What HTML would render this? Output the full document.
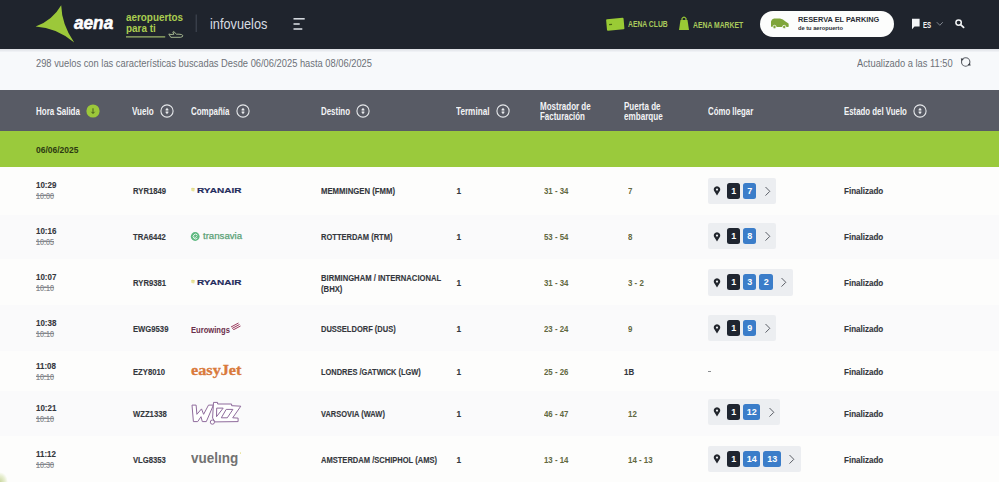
<!DOCTYPE html><html><head><meta charset="utf-8"><style>
*{margin:0;padding:0;box-sizing:border-box}
html,body{width:999px;height:482px;overflow:hidden;background:#fdfdfc;font-family:"Liberation Sans",sans-serif}
.t{position:absolute;white-space:nowrap;transform-origin:0 0}
.r{-webkit-text-stroke:0.12px #34373d}
.a{position:absolute}
</style></head><body>
<div class="a" style="left:0;top:0;width:999px;height:49px;background:#1f242d"></div>
<div class="a" style="left:0;top:49px;width:999px;height:41px;background:#f7f9fb"></div>
<div class="a" style="left:0;top:49px;width:999px;height:3px;background:linear-gradient(#dcdfe4,#f3f5f8)"></div>
<svg class="a" style="left:0;top:0" width="320" height="49" viewBox="0 0 320 49">
<path d="M61.2 5.2 Q61.7 24.4 74.2 42.6 Q56.4 27.7 35.6 26.6 Q52.6 20.2 61.2 5.2 Z" fill="#9cc83a"/>
<line x1="126" y1="36.9" x2="165.2" y2="36.9" stroke="#9db56a" stroke-width="1.2"/>
<path d="M168.8 34 L170.8 37.3 L180.5 37.3 Q183.3 36.8 182.8 35.5 Q182 34.2 179 34.2 L176.5 34.2 L173.8 31.6 L172.8 32 L174 34.2 L171 34.5 Z" fill="none" stroke="#b2c59a" stroke-width="0.9"/>
<line x1="196.2" y1="14.5" x2="196.2" y2="32" stroke="#444b56" stroke-width="1"/>
<line x1="293.5" y1="18.8" x2="304.7" y2="18.8" stroke="#d4d8de" stroke-width="1.6"/>
<line x1="293.5" y1="24" x2="299.7" y2="24" stroke="#d4d8de" stroke-width="1.6"/>
<line x1="293.5" y1="29" x2="302.3" y2="29" stroke="#d4d8de" stroke-width="1.6"/>
</svg>
<div class="t " style="left:74.30px;top:13.18px;font-size:19px;line-height:19px;font-weight:700;color:#fff;transform:scaleX(0.9049);font-style:italic;-webkit-text-stroke:0.6px #fff;">aena</div>
<div class="t " style="left:125.60px;top:11.76px;font-size:10.8px;line-height:10.8px;font-weight:700;color:#aacd50;transform:scaleX(0.9147);">aeropuertos</div>
<div class="t " style="left:125.60px;top:22.96px;font-size:10.8px;line-height:10.8px;font-weight:700;color:#aacd50;transform:scaleX(0.9167);">para ti</div>
<div class="t " style="left:209.60px;top:16.53px;font-size:14.2px;line-height:14.2px;font-weight:400;color:#d8dce2;transform:scaleX(0.8973);">infovuelos</div>
<svg class="a" style="left:600px;top:0" width="399" height="49" viewBox="600 0 399 49">
<g transform="rotate(-5 615 24)"><rect x="606.5" y="18.5" width="17.5" height="11.5" rx="1" fill="#9acb35"/><rect x="609" y="23.5" width="3" height="1.2" fill="#4a6a10"/></g>
<path d="M680.5 20 L687.5 20 L689 30 L679 30 Z" fill="#9acb35"/>
<path d="M682 20.5 L682 18.5 Q684 15.8 686 18.5 L686 20.5" fill="none" stroke="#9acb35" stroke-width="1.2"/>
</svg>
<div class="t " style="left:628.00px;top:20.49px;font-size:8.6px;line-height:8.6px;font-weight:700;color:#aacb5c;transform:scaleX(0.7891);">AENA CLUB</div>
<div class="t " style="left:693.20px;top:20.59px;font-size:8.6px;line-height:8.6px;font-weight:700;color:#aacb5c;transform:scaleX(0.7942);">AENA MARKET</div>
<div class="a" style="left:759.5px;top:11px;width:134.5px;height:25.5px;border-radius:13px;background:#fcfdfc"></div>
<svg class="a" style="left:770px;top:17px" width="20" height="13" viewBox="770 17 20 13">
<path d="M771 26 L771 21.5 Q771.5 19 774 18.6 L780 18.4 Q783 18.6 785.5 21.5 L788.5 23.5 Q789 25 788.5 27 L771.5 27 Z" fill="#7fa53a"/>
<circle cx="774.5" cy="27" r="1.7" fill="#7fa53a" stroke="#fcfdfc" stroke-width="0.8"/>
<circle cx="784.2" cy="27" r="1.7" fill="#7fa53a" stroke="#fcfdfc" stroke-width="0.8"/>
</svg>
<div class="t " style="left:797.80px;top:16.36px;font-size:8px;line-height:8px;font-weight:700;color:#2a2e35;transform:scaleX(0.9189);">RESERVA EL PARKING</div>
<div class="t " style="left:797.80px;top:25.07px;font-size:6.2px;line-height:6.2px;font-weight:700;color:#2a2e35;transform:scaleX(0.9199);">de tu aeropuerto</div>
<svg class="a" style="left:905px;top:12px" width="70" height="24" viewBox="905 12 70 24">
<path d="M912 18.8 L919.6 18.8 L919.6 26.5 L914.5 26.5 L912 29.2 Z" fill="#f2f4f6"/>
<path d="M936.8 22.2 L939.8 25.3 L942.8 22.2" fill="none" stroke="#8a9099" stroke-width="0.9"/>
<circle cx="958.6" cy="22.6" r="2.7" fill="none" stroke="#f2f4f6" stroke-width="1.5"/>
<line x1="960.6" y1="24.6" x2="963.6" y2="27.3" stroke="#f2f4f6" stroke-width="1.8" stroke-linecap="round"/>
</svg>
<div class="t " style="left:922.80px;top:20.59px;font-size:8.6px;line-height:8.6px;font-weight:700;color:#f2f4f6;transform:scaleX(0.7142);">ES</div>
<div class="t " style="left:36.00px;top:59.33px;font-size:10px;line-height:10px;font-weight:400;color:#6d7178;transform:scaleX(0.9327);">298 vuelos con las características buscadas Desde 06/06/2025 hasta 08/06/2025</div>
<div class="t " style="left:856.70px;top:59.23px;font-size:10px;line-height:10px;font-weight:400;color:#6d7178;transform:scaleX(0.9313);">Actualizado a las 11:50</div>
<svg class="a" style="left:958px;top:54px" width="16" height="16" viewBox="958 54 16 16">
<circle cx="965.7" cy="62" r="4.2" fill="none" stroke="#5b5f66" stroke-width="1.1"/>
<path d="M960.8 58.2 L963.8 59 L961.5 61.3 Z" fill="#3b3f46"/>
<path d="M970.6 65.8 L967.6 65 L969.9 62.7 Z" fill="#3b3f46"/>
</svg>
<div class="a" style="left:0;top:90px;width:999px;height:40.5px;background:#585b65"></div>
<div class="t " style="left:35.50px;top:107.11px;font-size:10.1px;line-height:10.1px;font-weight:700;color:#f3f4f6;transform:scaleX(0.7906);">Hora Salida</div>
<svg class="a" style="left:85.5px;top:104.1px" width="14" height="14" viewBox="0 0 14 14"><circle cx="7" cy="7" r="6.6" fill="#9cc83a"/><path d="M7 4.3 L7 9.2 M5.4 7.8 L7 9.5 L8.6 7.8" fill="none" stroke="#3e5218" stroke-width="0.9"/></svg>
<div class="t " style="left:132.00px;top:107.11px;font-size:10.1px;line-height:10.1px;font-weight:700;color:#f3f4f6;transform:scaleX(0.8020);">Vuelo</div>
<svg class="a" style="left:159.5px;top:104.1px" width="14" height="14" viewBox="0 0 14 14"><circle cx="7" cy="7" r="6.1" fill="none" stroke="#e6e8eb" stroke-width="1.1"/><path d="M5.1 6.3 L8.9 6.3 L7 3.7 Z M5.1 7.7 L8.9 7.7 L7 10.3 Z" fill="#e6e8eb"/><path d="M7 5.5 L7 8.5" stroke="#e6e8eb" stroke-width="0.8"/></svg>
<div class="t " style="left:190.50px;top:107.11px;font-size:10.1px;line-height:10.1px;font-weight:700;color:#f3f4f6;transform:scaleX(0.7868);">Compañía</div>
<svg class="a" style="left:236.0px;top:104.1px" width="14" height="14" viewBox="0 0 14 14"><circle cx="7" cy="7" r="6.1" fill="none" stroke="#e6e8eb" stroke-width="1.1"/><path d="M5.1 6.3 L8.9 6.3 L7 3.7 Z M5.1 7.7 L8.9 7.7 L7 10.3 Z" fill="#e6e8eb"/><path d="M7 5.5 L7 8.5" stroke="#e6e8eb" stroke-width="0.8"/></svg>
<div class="t " style="left:320.50px;top:107.11px;font-size:10.1px;line-height:10.1px;font-weight:700;color:#f3f4f6;transform:scaleX(0.7834);">Destino</div>
<svg class="a" style="left:356.0px;top:104.1px" width="14" height="14" viewBox="0 0 14 14"><circle cx="7" cy="7" r="6.1" fill="none" stroke="#e6e8eb" stroke-width="1.1"/><path d="M5.1 6.3 L8.9 6.3 L7 3.7 Z M5.1 7.7 L8.9 7.7 L7 10.3 Z" fill="#e6e8eb"/><path d="M7 5.5 L7 8.5" stroke="#e6e8eb" stroke-width="0.8"/></svg>
<div class="t " style="left:456.00px;top:107.11px;font-size:10.1px;line-height:10.1px;font-weight:700;color:#f3f4f6;transform:scaleX(0.8100);">Terminal</div>
<svg class="a" style="left:496.0px;top:104.1px" width="14" height="14" viewBox="0 0 14 14"><circle cx="7" cy="7" r="6.1" fill="none" stroke="#e6e8eb" stroke-width="1.1"/><path d="M5.1 6.3 L8.9 6.3 L7 3.7 Z M5.1 7.7 L8.9 7.7 L7 10.3 Z" fill="#e6e8eb"/><path d="M7 5.5 L7 8.5" stroke="#e6e8eb" stroke-width="0.8"/></svg>
<div class="t " style="left:540.00px;top:101.61px;font-size:10.1px;line-height:10.1px;font-weight:700;color:#f3f4f6;transform:scaleX(0.7932);">Mostrador de</div>
<div class="t " style="left:540.00px;top:112.31px;font-size:10.1px;line-height:10.1px;font-weight:700;color:#f3f4f6;transform:scaleX(0.7858);">Facturación</div>
<div class="t " style="left:624.30px;top:101.61px;font-size:10.1px;line-height:10.1px;font-weight:700;color:#f3f4f6;transform:scaleX(0.7934);">Puerta de</div>
<div class="t " style="left:624.30px;top:112.31px;font-size:10.1px;line-height:10.1px;font-weight:700;color:#f3f4f6;transform:scaleX(0.8026);">embarque</div>
<div class="t " style="left:708.00px;top:107.11px;font-size:10.1px;line-height:10.1px;font-weight:700;color:#f3f4f6;transform:scaleX(0.7751);">Cómo llegar</div>
<div class="t " style="left:843.60px;top:107.11px;font-size:10.1px;line-height:10.1px;font-weight:700;color:#f3f4f6;transform:scaleX(0.7765);">Estado del Vuelo</div>
<svg class="a" style="left:912.8px;top:104.1px" width="14" height="14" viewBox="0 0 14 14"><circle cx="7" cy="7" r="6.1" fill="none" stroke="#e6e8eb" stroke-width="1.1"/><path d="M5.1 6.3 L8.9 6.3 L7 3.7 Z M5.1 7.7 L8.9 7.7 L7 10.3 Z" fill="#e6e8eb"/><path d="M7 5.5 L7 8.5" stroke="#e6e8eb" stroke-width="0.8"/></svg>
<div class="a" style="left:0;top:130.5px;width:999px;height:36.5px;background:#9aca3c"></div>
<div class="t " style="left:35.50px;top:145.81px;font-size:8.4px;line-height:8.4px;font-weight:700;color:#2d3a12;transform:scaleX(1.0109);">06/06/2025</div>
<div class="t r" style="left:35.90px;top:181.22px;font-size:8.3px;line-height:8.3px;font-weight:700;color:#34373d;transform:scaleX(0.9600);">10:29</div>
<div class="t " style="left:35.90px;top:192.32px;font-size:8.3px;line-height:8.3px;font-weight:400;color:#85888d;transform:scaleX(0.8600);-webkit-text-stroke:0.2px #85888d;">10:00</div>
<div class="a" style="left:35.8px;top:195.2px;width:18.3px;height:0.9px;background:#85888d"></div>
<div class="t r" style="left:132.70px;top:187.12px;font-size:8.3px;line-height:8.3px;font-weight:700;color:#34373d;transform:scaleX(0.9250);">RYR1849</div>
<div class="t r" style="left:320.90px;top:187.12px;font-size:8.3px;line-height:8.3px;font-weight:700;color:#34373d;transform:scaleX(0.9331);">MEMMINGEN (FMM)</div>
<div class="t r" style="left:456.60px;top:187.12px;font-size:8.3px;line-height:8.3px;font-weight:700;color:#34373d;transform:scaleX(1.0000);">1</div>
<div class="t " style="left:544.10px;top:187.12px;font-size:8.3px;line-height:8.3px;font-weight:700;color:#62683f;transform:scaleX(0.9440);">31 - 34</div>
<div class="t " style="left:628.00px;top:187.12px;font-size:8.3px;line-height:8.3px;font-weight:700;color:#62683f;transform:scaleX(0.9500);">7</div>
<div class="t r" style="left:843.70px;top:187.12px;font-size:8.3px;line-height:8.3px;font-weight:700;color:#34373d;transform:scaleX(0.9683);">Finalizado</div>
<div class="a" style="left:708.3px;top:177.5px;width:68.2px;height:26.3px;border-radius:2px;background:#eceef1"><div class="a" style="left:18.7px;top:5px;width:13.5px;height:16px;border-radius:2.5px;background:#1f2530;color:#fff;font-size:9px;font-weight:700;line-height:16px;text-align:center">1</div><div class="a" style="left:34.7px;top:5px;width:13.5px;height:16px;border-radius:2.5px;background:#3b7dc9;color:#fff;font-size:9px;font-weight:700;line-height:16px;text-align:center">7</div><svg class="a" style="left:55.7px;top:8px" width="8" height="11" viewBox="0 0 8 11"><path d="M1.5 1 L5.8 5.3 L1.5 9.6" fill="none" stroke="#5a5e66" stroke-width="1"/></svg><svg class="a" style="left:5px;top:8.5px" width="8" height="10" viewBox="0 0 8 10"><path d="M4 9.5 L1.2 5 A3.2 3.2 0 1 1 6.8 5 Z" fill="#22262d"/><circle cx="4" cy="3.6" r="1.1" fill="#eceef1"/></svg></div>
<svg class="a" style="left:190px;top:187.0px" width="6" height="6" viewBox="0 0 6 6"><path d="M1 1 Q3 0.2 5 1.2 L4.2 4.5 L1.5 4 Z" fill="#e9e49a"/><path d="M2.6 1.5 L3.6 1.6" stroke="#c9c070" stroke-width="0.6"/></svg>
<div class="t " style="left:197.00px;top:187.46px;font-size:8px;line-height:8px;font-weight:700;color:#1f2b5c;transform:scaleX(1.2542);-webkit-text-stroke:0.15px #1f2b5c;">RYANAIR</div>
<div class="a" style="left:0;top:215px;width:999px;height:44px;background:#fafafb"></div>
<div class="t r" style="left:35.90px;top:227.22px;font-size:8.3px;line-height:8.3px;font-weight:700;color:#34373d;transform:scaleX(0.9600);">10:16</div>
<div class="t " style="left:35.90px;top:238.32px;font-size:8.3px;line-height:8.3px;font-weight:400;color:#85888d;transform:scaleX(0.8600);-webkit-text-stroke:0.2px #85888d;">10:05</div>
<div class="a" style="left:35.8px;top:241.2px;width:18.3px;height:0.9px;background:#85888d"></div>
<div class="t r" style="left:132.70px;top:233.12px;font-size:8.3px;line-height:8.3px;font-weight:700;color:#34373d;transform:scaleX(0.9250);">TRA6442</div>
<div class="t r" style="left:320.90px;top:233.12px;font-size:8.3px;line-height:8.3px;font-weight:700;color:#34373d;transform:scaleX(0.9068);">ROTTERDAM (RTM)</div>
<div class="t r" style="left:456.60px;top:233.12px;font-size:8.3px;line-height:8.3px;font-weight:700;color:#34373d;transform:scaleX(1.0000);">1</div>
<div class="t " style="left:544.10px;top:233.12px;font-size:8.3px;line-height:8.3px;font-weight:700;color:#62683f;transform:scaleX(0.9440);">53 - 54</div>
<div class="t " style="left:628.00px;top:233.12px;font-size:8.3px;line-height:8.3px;font-weight:700;color:#62683f;transform:scaleX(0.9500);">8</div>
<div class="t r" style="left:843.70px;top:233.12px;font-size:8.3px;line-height:8.3px;font-weight:700;color:#34373d;transform:scaleX(0.9683);">Finalizado</div>
<div class="a" style="left:708.3px;top:223.2px;width:68.2px;height:26.3px;border-radius:2px;background:#eceef1"><div class="a" style="left:18.7px;top:5px;width:13.5px;height:16px;border-radius:2.5px;background:#1f2530;color:#fff;font-size:9px;font-weight:700;line-height:16px;text-align:center">1</div><div class="a" style="left:34.7px;top:5px;width:13.5px;height:16px;border-radius:2.5px;background:#3b7dc9;color:#fff;font-size:9px;font-weight:700;line-height:16px;text-align:center">8</div><svg class="a" style="left:55.7px;top:8px" width="8" height="11" viewBox="0 0 8 11"><path d="M1.5 1 L5.8 5.3 L1.5 9.6" fill="none" stroke="#5a5e66" stroke-width="1"/></svg><svg class="a" style="left:5px;top:8.5px" width="8" height="10" viewBox="0 0 8 10"><path d="M4 9.5 L1.2 5 A3.2 3.2 0 1 1 6.8 5 Z" fill="#22262d"/><circle cx="4" cy="3.6" r="1.1" fill="#eceef1"/></svg></div>
<svg class="a" style="left:190px;top:231px" width="11" height="11" viewBox="190 231 11 11"><circle cx="195.2" cy="236.5" r="4.4" fill="#5db880"/><path d="M197.3 234.9 A2.4 2.4 0 1 0 197.4 238.1" fill="none" stroke="#e8f6ec" stroke-width="1"/><path d="M194.2 236.8 L195.3 237.9 L197.2 235.6" fill="none" stroke="#e8f6ec" stroke-width="0.8"/></svg>
<div class="t " style="left:202.50px;top:232.35px;font-size:8.7px;line-height:8.7px;font-weight:400;color:#5aa277;transform:scaleX(1.1070);-webkit-text-stroke:0.25px #5aa277;">transavia</div>
<div class="t r" style="left:35.90px;top:273.22px;font-size:8.3px;line-height:8.3px;font-weight:700;color:#34373d;transform:scaleX(0.9600);">10:07</div>
<div class="t " style="left:35.90px;top:284.32px;font-size:8.3px;line-height:8.3px;font-weight:400;color:#85888d;transform:scaleX(0.8600);-webkit-text-stroke:0.2px #85888d;">10:10</div>
<div class="a" style="left:35.8px;top:287.2px;width:18.3px;height:0.9px;background:#85888d"></div>
<div class="t r" style="left:132.70px;top:279.12px;font-size:8.3px;line-height:8.3px;font-weight:700;color:#34373d;transform:scaleX(0.9250);">RYR9381</div>
<div class="t r" style="left:320.90px;top:273.72px;font-size:8.3px;line-height:8.3px;font-weight:700;color:#34373d;transform:scaleX(0.9212);">BIRMINGHAM / INTERNACIONAL</div>
<div class="t r" style="left:320.90px;top:284.62px;font-size:8.3px;line-height:8.3px;font-weight:700;color:#34373d;transform:scaleX(0.9300);">(BHX)</div>
<div class="t r" style="left:456.60px;top:279.12px;font-size:8.3px;line-height:8.3px;font-weight:700;color:#34373d;transform:scaleX(1.0000);">1</div>
<div class="t " style="left:544.10px;top:279.12px;font-size:8.3px;line-height:8.3px;font-weight:700;color:#62683f;transform:scaleX(0.9440);">31 - 34</div>
<div class="t " style="left:628.00px;top:279.12px;font-size:8.3px;line-height:8.3px;font-weight:700;color:#62683f;transform:scaleX(0.9500);">3 - 2</div>
<div class="t r" style="left:843.70px;top:279.12px;font-size:8.3px;line-height:8.3px;font-weight:700;color:#34373d;transform:scaleX(0.9683);">Finalizado</div>
<div class="a" style="left:708.3px;top:269.4px;width:84.7px;height:26.3px;border-radius:2px;background:#eceef1"><div class="a" style="left:18.7px;top:5px;width:13.5px;height:16px;border-radius:2.5px;background:#1f2530;color:#fff;font-size:9px;font-weight:700;line-height:16px;text-align:center">1</div><div class="a" style="left:34.7px;top:5px;width:13.5px;height:16px;border-radius:2.5px;background:#3b7dc9;color:#fff;font-size:9px;font-weight:700;line-height:16px;text-align:center">3</div><div class="a" style="left:51.2px;top:5px;width:13.5px;height:16px;border-radius:2.5px;background:#3b7dc9;color:#fff;font-size:9px;font-weight:700;line-height:16px;text-align:center">2</div><svg class="a" style="left:72.2px;top:8px" width="8" height="11" viewBox="0 0 8 11"><path d="M1.5 1 L5.8 5.3 L1.5 9.6" fill="none" stroke="#5a5e66" stroke-width="1"/></svg><svg class="a" style="left:5px;top:8.5px" width="8" height="10" viewBox="0 0 8 10"><path d="M4 9.5 L1.2 5 A3.2 3.2 0 1 1 6.8 5 Z" fill="#22262d"/><circle cx="4" cy="3.6" r="1.1" fill="#eceef1"/></svg></div>
<svg class="a" style="left:190px;top:279.0px" width="6" height="6" viewBox="0 0 6 6"><path d="M1 1 Q3 0.2 5 1.2 L4.2 4.5 L1.5 4 Z" fill="#e9e49a"/><path d="M2.6 1.5 L3.6 1.6" stroke="#c9c070" stroke-width="0.6"/></svg>
<div class="t " style="left:197.00px;top:279.46px;font-size:8px;line-height:8px;font-weight:700;color:#1f2b5c;transform:scaleX(1.2542);-webkit-text-stroke:0.15px #1f2b5c;">RYANAIR</div>
<div class="a" style="left:0;top:305px;width:999px;height:46px;background:#fafafb"></div>
<div class="t r" style="left:35.90px;top:319.22px;font-size:8.3px;line-height:8.3px;font-weight:700;color:#34373d;transform:scaleX(0.9600);">10:38</div>
<div class="t " style="left:35.90px;top:330.32px;font-size:8.3px;line-height:8.3px;font-weight:400;color:#85888d;transform:scaleX(0.8600);-webkit-text-stroke:0.2px #85888d;">10:10</div>
<div class="a" style="left:35.8px;top:333.2px;width:18.3px;height:0.9px;background:#85888d"></div>
<div class="t r" style="left:132.70px;top:325.12px;font-size:8.3px;line-height:8.3px;font-weight:700;color:#34373d;transform:scaleX(0.9250);">EWG9539</div>
<div class="t r" style="left:320.90px;top:325.12px;font-size:8.3px;line-height:8.3px;font-weight:700;color:#34373d;transform:scaleX(0.9050);">DUSSELDORF (DUS)</div>
<div class="t r" style="left:456.60px;top:325.12px;font-size:8.3px;line-height:8.3px;font-weight:700;color:#34373d;transform:scaleX(1.0000);">1</div>
<div class="t " style="left:544.10px;top:325.12px;font-size:8.3px;line-height:8.3px;font-weight:700;color:#62683f;transform:scaleX(0.9440);">23 - 24</div>
<div class="t " style="left:628.00px;top:325.12px;font-size:8.3px;line-height:8.3px;font-weight:700;color:#62683f;transform:scaleX(0.9500);">9</div>
<div class="t r" style="left:843.70px;top:325.12px;font-size:8.3px;line-height:8.3px;font-weight:700;color:#34373d;transform:scaleX(0.9683);">Finalizado</div>
<div class="a" style="left:708.3px;top:315.1px;width:68.2px;height:26.3px;border-radius:2px;background:#eceef1"><div class="a" style="left:18.7px;top:5px;width:13.5px;height:16px;border-radius:2.5px;background:#1f2530;color:#fff;font-size:9px;font-weight:700;line-height:16px;text-align:center">1</div><div class="a" style="left:34.7px;top:5px;width:13.5px;height:16px;border-radius:2.5px;background:#3b7dc9;color:#fff;font-size:9px;font-weight:700;line-height:16px;text-align:center">9</div><svg class="a" style="left:55.7px;top:8px" width="8" height="11" viewBox="0 0 8 11"><path d="M1.5 1 L5.8 5.3 L1.5 9.6" fill="none" stroke="#5a5e66" stroke-width="1"/></svg><svg class="a" style="left:5px;top:8.5px" width="8" height="10" viewBox="0 0 8 10"><path d="M4 9.5 L1.2 5 A3.2 3.2 0 1 1 6.8 5 Z" fill="#22262d"/><circle cx="4" cy="3.6" r="1.1" fill="#eceef1"/></svg></div>
<div class="t " style="left:190.80px;top:326.01px;font-size:8.4px;line-height:8.4px;font-weight:700;color:#6a2e4a;transform:scaleX(0.9086);">Eurowings</div>
<svg class="a" style="left:230px;top:321.5px" width="11" height="8" viewBox="0 0 11 8"><path d="M1 5 L8.5 1 M2 6.5 L9.5 2.5 M3 8 L10.5 4" stroke="#9b3a5d" stroke-width="1"/></svg>
<div class="t r" style="left:35.90px;top:361.72px;font-size:8.3px;line-height:8.3px;font-weight:700;color:#34373d;transform:scaleX(0.9600);">11:08</div>
<div class="t " style="left:35.90px;top:372.82px;font-size:8.3px;line-height:8.3px;font-weight:400;color:#85888d;transform:scaleX(0.8600);-webkit-text-stroke:0.2px #85888d;">10:10</div>
<div class="a" style="left:35.8px;top:375.7px;width:18.3px;height:0.9px;background:#85888d"></div>
<div class="t r" style="left:132.70px;top:367.62px;font-size:8.3px;line-height:8.3px;font-weight:700;color:#34373d;transform:scaleX(0.9250);">EZY8010</div>
<div class="t r" style="left:320.90px;top:367.62px;font-size:8.3px;line-height:8.3px;font-weight:700;color:#34373d;transform:scaleX(0.8965);">LONDRES /GATWICK (LGW)</div>
<div class="t r" style="left:456.60px;top:367.62px;font-size:8.3px;line-height:8.3px;font-weight:700;color:#34373d;transform:scaleX(1.0000);">1</div>
<div class="t " style="left:544.10px;top:367.62px;font-size:8.3px;line-height:8.3px;font-weight:700;color:#62683f;transform:scaleX(0.9440);">25 - 26</div>
<div class="t r" style="left:624.20px;top:367.62px;font-size:8.3px;line-height:8.3px;font-weight:700;color:#34373d;transform:scaleX(0.9500);">1B</div>
<div class="t r" style="left:843.70px;top:367.62px;font-size:8.3px;line-height:8.3px;font-weight:700;color:#34373d;transform:scaleX(0.9683);">Finalizado</div>
<div class="a" style="left:708px;top:371.1px;width:2.5px;height:1px;background:#8a8d90"></div>
<div class="t " style="left:190.80px;top:363.80px;font-size:13.6px;line-height:13.6px;font-weight:700;color:#d97a3c;transform:scaleX(1.1940);font-family:'Liberation Serif',serif;-webkit-text-stroke:0.3px #d97a3c;">easyJet</div>
<div class="a" style="left:0;top:391px;width:999px;height:45px;background:#fafafb"></div>
<div class="t r" style="left:35.90px;top:404.22px;font-size:8.3px;line-height:8.3px;font-weight:700;color:#34373d;transform:scaleX(0.9600);">10:21</div>
<div class="t " style="left:35.90px;top:415.32px;font-size:8.3px;line-height:8.3px;font-weight:400;color:#85888d;transform:scaleX(0.8600);-webkit-text-stroke:0.2px #85888d;">10:10</div>
<div class="a" style="left:35.8px;top:418.2px;width:18.3px;height:0.9px;background:#85888d"></div>
<div class="t r" style="left:132.70px;top:410.12px;font-size:8.3px;line-height:8.3px;font-weight:700;color:#34373d;transform:scaleX(0.9250);">WZZ1338</div>
<div class="t r" style="left:320.90px;top:410.12px;font-size:8.3px;line-height:8.3px;font-weight:700;color:#34373d;transform:scaleX(0.8999);">VARSOVIA (WAW)</div>
<div class="t r" style="left:456.60px;top:410.12px;font-size:8.3px;line-height:8.3px;font-weight:700;color:#34373d;transform:scaleX(1.0000);">1</div>
<div class="t " style="left:544.10px;top:410.12px;font-size:8.3px;line-height:8.3px;font-weight:700;color:#62683f;transform:scaleX(0.9440);">46 - 47</div>
<div class="t " style="left:628.00px;top:410.12px;font-size:8.3px;line-height:8.3px;font-weight:700;color:#62683f;transform:scaleX(0.9500);">12</div>
<div class="t r" style="left:843.70px;top:410.12px;font-size:8.3px;line-height:8.3px;font-weight:700;color:#34373d;transform:scaleX(0.9683);">Finalizado</div>
<div class="a" style="left:708.3px;top:398.5px;width:72.2px;height:26.3px;border-radius:2px;background:#eceef1"><div class="a" style="left:18.7px;top:5px;width:13.5px;height:16px;border-radius:2.5px;background:#1f2530;color:#fff;font-size:9px;font-weight:700;line-height:16px;text-align:center">1</div><div class="a" style="left:34.7px;top:5px;width:17.5px;height:16px;border-radius:2.5px;background:#3b7dc9;color:#fff;font-size:9px;font-weight:700;line-height:16px;text-align:center">12</div><svg class="a" style="left:59.7px;top:8px" width="8" height="11" viewBox="0 0 8 11"><path d="M1.5 1 L5.8 5.3 L1.5 9.6" fill="none" stroke="#5a5e66" stroke-width="1"/></svg><svg class="a" style="left:5px;top:8.5px" width="8" height="10" viewBox="0 0 8 10"><path d="M4 9.5 L1.2 5 A3.2 3.2 0 1 1 6.8 5 Z" fill="#22262d"/><circle cx="4" cy="3.6" r="1.1" fill="#eceef1"/></svg></div>
<svg class="a" style="left:0;top:0" width="260" height="482" viewBox="0 0 260 482"><g fill="#fff" stroke="#8f6b9c" stroke-width="1" stroke-linejoin="round"><path d="M192,405.1 L196.1,405.1 L196.9,414.3 L201.5,408.9 L203.6,414.3 L208.5,405.1 L213.4,405.1 L206.3,421.6 L202.3,421.6 L201,416.7 L197.7,421.6 L193.4,421.6 Z"/><path d="M213.5,402.4 L217.6,402.4 L217.6,404 L231.6,404 L231.6,405.7 L240.8,406.2 L232.7,417.8 L238.1,418.1 L238.1,421.6 L214.9,421.9 L212.6,418 Z"/><path d="M216.7,408.1 L223.2,408.1 L216.5,416.7 Z"/><path d="M226.2,409.4 L232.9,409.4 L227.3,417.8 L221.3,417.8 Z"/><circle cx="212.4" cy="422.1" r="2.1"/></g></svg>
<div class="t r" style="left:35.90px;top:450.22px;font-size:8.3px;line-height:8.3px;font-weight:700;color:#34373d;transform:scaleX(0.9600);">11:12</div>
<div class="t " style="left:35.90px;top:461.32px;font-size:8.3px;line-height:8.3px;font-weight:400;color:#85888d;transform:scaleX(0.8600);-webkit-text-stroke:0.2px #85888d;">10:30</div>
<div class="a" style="left:35.8px;top:464.2px;width:18.3px;height:0.9px;background:#85888d"></div>
<div class="t r" style="left:132.70px;top:456.12px;font-size:8.3px;line-height:8.3px;font-weight:700;color:#34373d;transform:scaleX(0.9250);">VLG8353</div>
<div class="t r" style="left:320.90px;top:456.12px;font-size:8.3px;line-height:8.3px;font-weight:700;color:#34373d;transform:scaleX(0.9093);">AMSTERDAM /SCHIPHOL (AMS)</div>
<div class="t r" style="left:456.60px;top:456.12px;font-size:8.3px;line-height:8.3px;font-weight:700;color:#34373d;transform:scaleX(1.0000);">1</div>
<div class="t " style="left:544.10px;top:456.12px;font-size:8.3px;line-height:8.3px;font-weight:700;color:#62683f;transform:scaleX(0.9440);">13 - 14</div>
<div class="t " style="left:628.00px;top:456.12px;font-size:8.3px;line-height:8.3px;font-weight:700;color:#62683f;transform:scaleX(0.9500);">14 - 13</div>
<div class="t r" style="left:843.70px;top:456.12px;font-size:8.3px;line-height:8.3px;font-weight:700;color:#34373d;transform:scaleX(0.9683);">Finalizado</div>
<div class="a" style="left:708.3px;top:445.6px;width:92.7px;height:26.3px;border-radius:2px;background:#eceef1"><div class="a" style="left:18.7px;top:5px;width:13.5px;height:16px;border-radius:2.5px;background:#1f2530;color:#fff;font-size:9px;font-weight:700;line-height:16px;text-align:center">1</div><div class="a" style="left:34.7px;top:5px;width:17.5px;height:16px;border-radius:2.5px;background:#3b7dc9;color:#fff;font-size:9px;font-weight:700;line-height:16px;text-align:center">14</div><div class="a" style="left:55.2px;top:5px;width:17.5px;height:16px;border-radius:2.5px;background:#3b7dc9;color:#fff;font-size:9px;font-weight:700;line-height:16px;text-align:center">13</div><svg class="a" style="left:80.2px;top:8px" width="8" height="11" viewBox="0 0 8 11"><path d="M1.5 1 L5.8 5.3 L1.5 9.6" fill="none" stroke="#5a5e66" stroke-width="1"/></svg><svg class="a" style="left:5px;top:8.5px" width="8" height="10" viewBox="0 0 8 10"><path d="M4 9.5 L1.2 5 A3.2 3.2 0 1 1 6.8 5 Z" fill="#22262d"/><circle cx="4" cy="3.6" r="1.1" fill="#eceef1"/></svg></div>
<div class="t " style="left:190.80px;top:452.38px;font-size:13.8px;line-height:13.8px;font-weight:700;color:#727272;transform:scaleX(0.9772);">vuelıng</div>
<div class="a" style="left:239.6px;top:452.4px;width:1.6px;height:1.6px;border-radius:1px;background:#e8e4a0"></div>
<div class="a" style="left:-8px;top:472px;width:16px;height:20px;border-radius:50%;background:radial-gradient(#c9d6a0,#e8efd2 45%,rgba(253,253,252,0) 70%)"></div>
</body></html>
